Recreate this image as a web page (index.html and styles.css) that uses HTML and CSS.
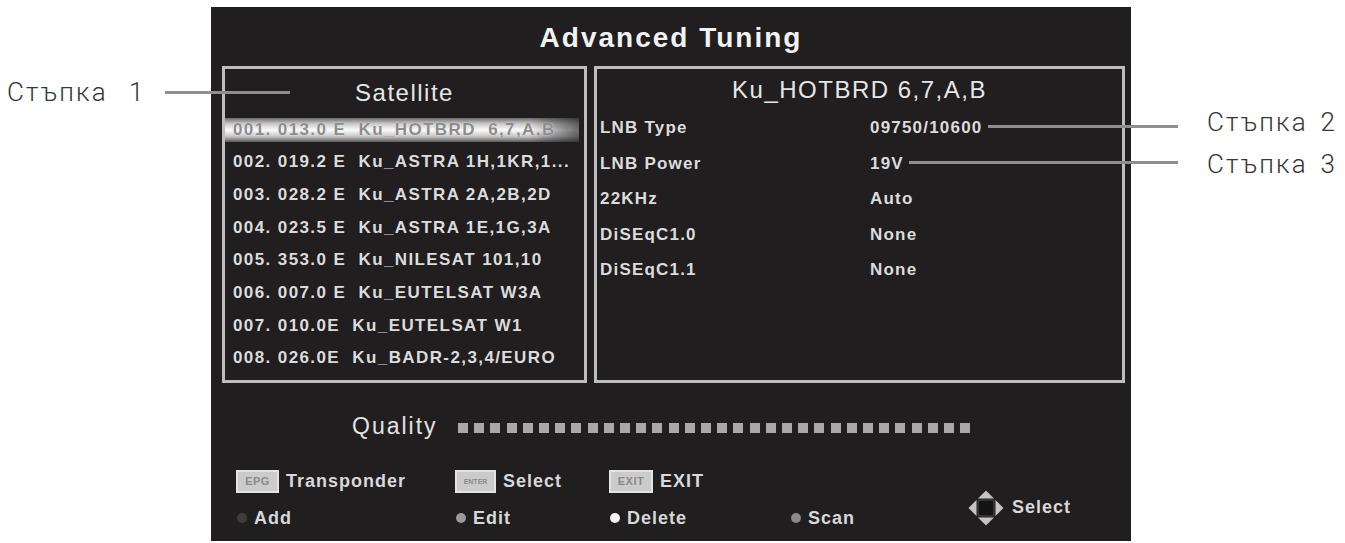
FILE: index.html
```html
<!DOCTYPE html>
<html lang="bg">
<head>
<meta charset="utf-8">
<title>Advanced Tuning</title>
<link rel="stylesheet" href="styles.css">
</head>
<body>
<div class="page">
  <aside class="gutter gutter-left">
    <div class="step step-left">Стъпка  1</div>
  </aside>

  <main class="screen">
    <h1 class="title">Advanced Tuning</h1>

    <div class="panels">
      <section class="panel panel-sat">
        <h2 class="panel-head sat-head">Satellite</h2>
        <ul class="sat-list">
          <li class="sat-row is-active">001. 013.0 E  Ku_HOTBRD  6,7,A,B</li>
          <li class="sat-row">002. 019.2 E  Ku_ASTRA 1H,1KR,1...</li>
          <li class="sat-row">003. 028.2 E  Ku_ASTRA 2A,2B,2D</li>
          <li class="sat-row">004. 023.5 E  Ku_ASTRA 1E,1G,3A</li>
          <li class="sat-row">005. 353.0 E  Ku_NILESAT 101,10</li>
          <li class="sat-row">006. 007.0 E  Ku_EUTELSAT W3A</li>
          <li class="sat-row">007. 010.0E  Ku_EUTELSAT W1</li>
          <li class="sat-row">008. 026.0E  Ku_BADR-2,3,4/EURO</li>
        </ul>
      </section>

      <section class="panel panel-info">
        <h2 class="panel-head info-head">Ku_HOTBRD 6,7,A,B</h2>
        <dl class="info-list">
          <div class="info-row"><dt>LNB Type</dt><dd>09750/10600</dd></div>
          <div class="info-row"><dt>LNB Power</dt><dd>19V</dd></div>
          <div class="info-row"><dt>22KHz</dt><dd>Auto</dd></div>
          <div class="info-row"><dt>DiSEqC1.0</dt><dd>None</dd></div>
          <div class="info-row"><dt>DiSEqC1.1</dt><dd>None</dd></div>
        </dl>
      </section>
    </div>

    <div class="quality">
      <span class="quality-label">Quality</span>
      <span class="quality-bar"></span>
    </div>

    <div class="help">
      <div class="key"><span class="badge">EPG</span><span>Transponder</span></div>
      <div class="key"><span class="badge badge-enter">ENTER</span><span>Select</span></div>
      <div class="key"><span class="badge badge-exit">EXIT</span><span>EXIT</span></div>
      <div class="act"><span class="dot dot-add"></span><span>Add</span></div>
      <div class="act"><span class="dot dot-edit"></span><span>Edit</span></div>
      <div class="act"><span class="dot dot-delete"></span><span>Delete</span></div>
      <div class="act"><span class="dot dot-scan"></span><span>Scan</span></div>
      <div class="nav">
        <svg class="nav-icon" width="38" height="38" viewBox="0 0 38 38" aria-hidden="true">
          <rect x="11" y="11" width="16" height="16" rx="2" fill="#141313" stroke="#3a3838" stroke-width="1.5"/>
          <polygon points="11,9.5 19,1.5 27,9.5" fill="#c4c4c4"/>
          <polygon points="11,28.5 19,36.5 27,28.5" fill="#c4c4c4"/>
          <polygon points="9.5,11 1.5,19 9.5,27" fill="#c4c4c4"/>
          <polygon points="28.5,11 36.5,19 28.5,27" fill="#c4c4c4"/>
        </svg>
        <span>Select</span>
      </div>
    </div>
  </main>

  <aside class="gutter gutter-right">
    <div class="step">Стъпка 2</div>
    <div class="step">Стъпка 3</div>
  </aside>

  <span class="leader leader-1"></span>
  <span class="leader leader-2"></span>
  <span class="leader leader-3"></span>
</div>
</body>
</html>
```

FILE: styles.css
```css
* {
  box-sizing: border-box;
  margin: 0;
  padding: 0;
}

html,
body {
  width: 1345px;
  height: 543px;
  overflow: hidden;
  background: #ffffff;
}

body {
  font-family: "Liberation Sans", Arial, sans-serif;
}

.page {
  position: relative;
  display: flex;
  width: 1345px;
  height: 543px;
}

/* ---------- annotation gutters ---------- */
.gutter {
  flex: none;
}

.gutter-left {
  width: 211px;
  padding: 75px 0 0 7px;
}

.gutter-right {
  width: 214px;
  padding: 105px 0 0 76px;
  display: flex;
  flex-direction: column;
  gap: 8px;
}

.step {
  font-family: Roboto, "Noto Sans", "DejaVu Sans", sans-serif;
  font-weight: 300;
  font-size: 26px;
  line-height: 34px;
  letter-spacing: 2.2px;
  word-spacing: 4px;
  color: #363636;
  white-space: pre;
}

.step-left {
  word-spacing: 2px;
}

.leader {
  position: absolute;
  height: 3px;
  background: #8e8e8e;
}

.leader-1 {
  left: 165px;
  top: 91px;
  width: 125px;
}

.leader-2 {
  left: 988px;
  top: 125px;
  width: 190px;
}

.leader-3 {
  left: 909px;
  top: 161px;
  width: 269px;
}

/* ---------- OSD screen ---------- */
.screen {
  flex: none;
  width: 920px;
  height: 534px;
  margin-top: 7px;
  background: #201e1e;
  color: #dcdcdc;
  display: flex;
  flex-direction: column;
}

.title {
  height: 59px;
  padding-top: 3px;
  line-height: 56px;
  text-align: center;
  font-size: 28px;
  font-weight: 700;
  letter-spacing: 2px;
  color: #f2f2f2;
}

.panels {
  display: flex;
  gap: 7px;
  height: 317px;
  padding: 0 6px 0 11px;
}

.panel {
  height: 317px;
  border: 3px solid #bdbdbd;
}

.panel-sat {
  width: 365px;
}

.panel-info {
  width: 531px;
}

.panel-head {
  font-size: 24px;
  font-weight: 400;
  letter-spacing: 1.5px;
  text-align: center;
  color: #e6e6e6;
}

.sat-head {
  height: 44.6px;
  padding-top: 3px;
  line-height: 41.6px;
}

.sat-list {
  list-style: none;
}

.sat-row {
  height: 32.7px;
  line-height: 32.7px;
  padding-left: 8px;
  font-size: 17px;
  font-weight: 700;
  letter-spacing: 1.4px;
  white-space: pre;
}

.sat-row.is-active {
  color: #8c8c8c;
  text-shadow: 0 0 1px #ffffff;
  background:
    linear-gradient(to right, rgba(32, 30, 30, 0) 0%, rgba(32, 30, 30, 0) 86%, rgba(32, 30, 30, 0.65) 100%) 0 50% / 354px 24px no-repeat,
    linear-gradient(to bottom, #6c6c6c 0%, #c8c8c8 24%, #fbfbfb 50%, #c8c8c8 76%, #5a5a5a 100%) 0 50% / 354px 24px no-repeat;
}

.info-head {
  height: 41.25px;
  line-height: 41.25px;
}

.info-row {
  display: flex;
  align-items: center;
  height: 35.5px;
  padding-left: 3px;
  font-size: 17px;
  font-weight: 700;
  letter-spacing: 1.2px;
}

.info-row dt {
  width: 270px;
}

/* ---------- quality ---------- */
.quality {
  display: flex;
  align-items: center;
  height: 30px;
  margin-top: 28px;
  padding-left: 141px;
}

.quality-label {
  width: 106px;
  font-size: 23px;
  letter-spacing: 2px;
  color: #e2e2e2;
}

.quality-bar {
  width: 512px;
  height: 10px;
  margin-top: 3px;
  background: repeating-linear-gradient(to right, #a8a8a8 0 10px, transparent 10px 16.2px);
}

/* ---------- help bar ---------- */
.help {
  display: grid;
  grid-template-columns: 219px 154px 181px 177px 1fr;
  grid-template-rows: 24px 24px;
  row-gap: 13px;
  margin-top: 28px;
  padding-left: 25px;
  font-size: 18px;
  font-weight: 700;
  letter-spacing: 1px;
  color: #d8d8d8;
}

.key {
  grid-row: 1;
  display: flex;
  align-items: center;
  gap: 7px;
}

.badge {
  display: flex;
  align-items: center;
  justify-content: center;
  width: 43px;
  height: 23px;
  background: #cbcbcb;
  border: 2px solid #e4e4e4;
  color: #8a8a8a;
  font-size: 11px;
  font-weight: 700;
  letter-spacing: 0.5px;
}

.badge-enter {
  width: 41px;
  font-size: 7px;
  letter-spacing: 0;
}

.badge-exit {
  width: 44px;
}

.act {
  grid-row: 2;
  display: flex;
  align-items: center;
  gap: 7px;
  padding-left: 1px;
}

.dot {
  flex: none;
  width: 10px;
  height: 10px;
  border-radius: 50%;
}

.dot-add {
  background: #3e3c3c;
}

.dot-edit {
  background: #9a9a9a;
}

.dot-delete {
  background: #f4f4f4;
}

.dot-scan {
  background: #8a8a8a;
}

.nav {
  grid-column: 5;
  grid-row: 1 / 3;
  display: flex;
  align-items: center;
  gap: 7px;
  padding-top: 16px;
}

.nav-icon {
  flex: none;
}
```
